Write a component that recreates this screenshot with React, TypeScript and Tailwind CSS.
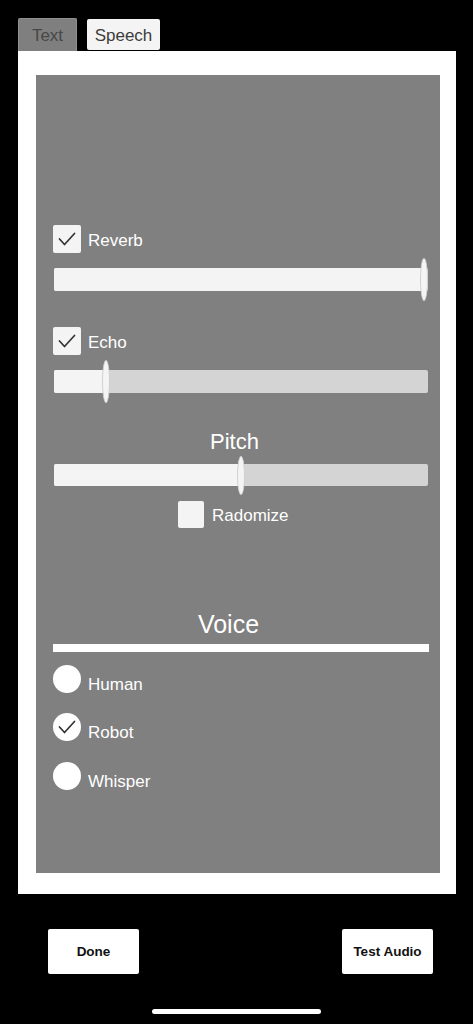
import React from "react";

const font = { fontFamily: '"Liberation Sans", Arial, sans-serif' };

function Check({ size = 28 }: { size?: number }) {
  return (
    <svg width={size} height={size} viewBox="0 0 28 28" fill="none">
      <polyline points="6.5,14 11.5,19.5 21.5,8.5" stroke="#333" strokeWidth="1.7" strokeLinecap="round" strokeLinejoin="round" />
    </svg>
  );
}

function Slider({ fill, handle }: { fill: string; handle: string }) {
  return (
    <div className="relative h-[23px] w-[374px] ml-[1px] rounded-[2px] bg-[#d4d4d4]">
      <div className={`h-full rounded-l-[2px] bg-[#f4f4f4] ${fill}`} />
      <div className={`absolute top-[-10px] h-[43px] w-[8px] rounded-[50%] bg-[#f4f4f4] border border-[#cfcfcf] ${handle}`} />
    </div>
  );
}

export default function App() {
  return (
    <div className="w-[473px] h-[1024px] bg-black flex flex-col overflow-hidden" style={font}>
      {/* tabs */}
      <div className="flex items-end gap-[10px] pl-[18px] pt-[18px] h-[51px]">
        <div className="w-[59px] h-[33px] pt-[2px] rounded-t-[2px] bg-[#7f7f7f] border border-[#8f8f8f] border-b-0 flex items-center justify-center text-[17px] text-[#474747]">
          Text
        </div>
        <div className="w-[73px] h-[31px] pt-[2px] mb-[1px] rounded-[2px] bg-[#f4f4f4] flex items-center justify-center text-[17px] text-[#3c3c3c]">
          Speech
        </div>
      </div>

      {/* panel */}
      <div className="ml-[18px] w-[438px] h-[843px] bg-white pl-[18px] pr-[16px] pt-[24px] pb-[21px]">
        <div className="w-full h-full bg-[#808080] flex flex-col pl-[17px] text-white">
          {/* Reverb */}
          <div className="mt-[150px] flex items-center gap-[7px] h-[28px]">
            <div className="w-[28px] h-[28px] rounded-[2px] bg-[#f4f4f4] flex items-center justify-center">
              <Check />
            </div>
            <span className="text-[17px] leading-none mt-[2px]">Reverb</span>
          </div>
          <div className="mt-[15px]">
            <Slider fill="w-[368px]" handle="left-[366px]" />
          </div>

          {/* Echo */}
          <div className="mt-[36px] flex items-center gap-[7px] h-[28px]">
            <div className="w-[28px] h-[28px] rounded-[2px] bg-[#f4f4f4] flex items-center justify-center">
              <Check />
            </div>
            <span className="text-[17px] leading-none mt-[2px]">Echo</span>
          </div>
          <div className="mt-[15px]">
            <Slider fill="w-[52px]" handle="left-[48px]" />
          </div>

          {/* Pitch */}
          <div className="mt-[36px] h-[26px] w-[376px] pr-[13px] flex items-center justify-center text-[22px] leading-none">
            Pitch
          </div>
          <div className="mt-[9px]">
            <div className="relative h-[22px] w-[374px] ml-[1px] rounded-[2px] bg-[#d4d4d4]">
              <div className="h-full w-[186px] rounded-l-[2px] bg-[#f4f4f4]" />
              <div className="absolute top-[-8px] h-[39px] w-[8px] rounded-[50%] bg-[#f4f4f4] border border-[#cfcfcf] left-[183px]" />
            </div>
          </div>
          <div className="mt-[15px] ml-[125px] flex items-center gap-[8px] h-[27px]">
            <div className="w-[26px] h-[27px] rounded-[2px] bg-[#f4f4f4]" />
            <span className="text-[17px] leading-none mt-[2px]">Radomize</span>
          </div>

          {/* Voice */}
          <div className="mt-[81px] h-[30px] w-[376px] pr-[25px] flex items-center justify-center text-[25px] leading-none">
            Voice
          </div>
          <div className="mt-[5px] h-[8px] w-[376px] bg-white" />

          <div className="mt-[12px] flex items-center gap-[7px] h-[29px]">
            <div className="w-[28px] h-[28px] rounded-full bg-white" />
            <span className="text-[17px] leading-none mt-[12px]">Human</span>
          </div>
          <div className="mt-[19px] flex items-center gap-[7px] h-[29px]">
            <div className="w-[28px] h-[28px] rounded-full bg-white flex items-center justify-center">
              <Check />
            </div>
            <span className="text-[17px] leading-none mt-[12px]">Robot</span>
          </div>
          <div className="mt-[20px] flex items-center gap-[7px] h-[29px]">
            <div className="w-[28px] h-[28px] rounded-full bg-white" />
            <span className="text-[17px] leading-none mt-[12px]">Whisper</span>
          </div>
        </div>
      </div>

      {/* bottom buttons */}
      <div className="mt-[35px] flex justify-between pl-[48px] pr-[40px]">
        <div className="w-[91px] h-[45px] pt-[2px] rounded-[2px] bg-white flex items-center justify-center text-[13.5px] font-bold text-[#111]">
          Done
        </div>
        <div className="w-[91px] h-[45px] pt-[2px] rounded-[2px] bg-white flex items-center justify-center text-[13.5px] font-bold text-[#111]">
          Test Audio
        </div>
      </div>
      <div className="mt-[35px] mx-auto w-[169px] h-[5px] rounded-full bg-white" />
    </div>
  );
}
